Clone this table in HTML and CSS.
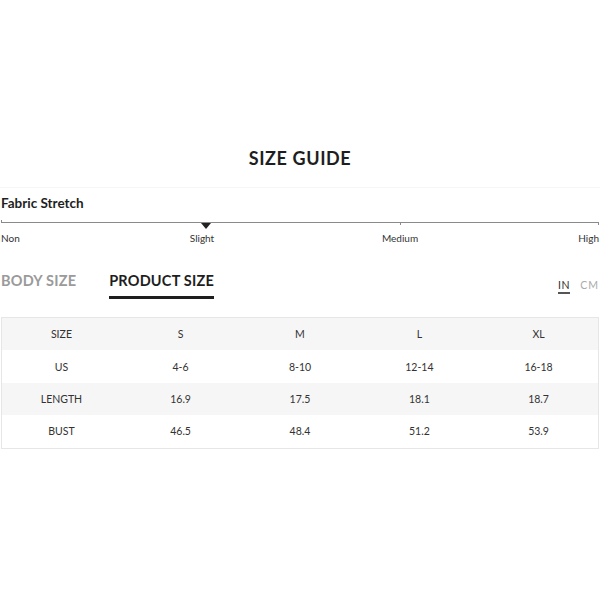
FILE: index.html
```html
<!DOCTYPE html>
<html>
<head>
<meta charset="utf-8">
<link rel="stylesheet" href="styles.css">
</head>
<body>
<div class="page">
  <h1 class="title">SIZE GUIDE</h1>
  <div class="stretch">
    <div class="stretch-title">Fabric Stretch</div>
    <div class="scale">
      <span class="tick tick-left"></span>
      <span class="tick tick-mid"></span>
      <span class="tick tick-right"></span>
      <span class="marker"></span>
    </div>
    <div class="labels">
      <span class="lab lab-non">Non</span>
      <span class="lab lab-slight">Slight</span>
      <span class="lab lab-medium">Medium</span>
      <span class="lab lab-high">High</span>
    </div>
  </div>
  <div class="tabs">
    <div class="tab-group">
      <span class="tab">BODY SIZE</span>
      <span class="tab active">PRODUCT SIZE</span>
    </div>
    <div class="units">
      <span class="unit active">IN</span>
      <span class="unit">CM</span>
    </div>
  </div>
  <table class="sizes">
    <tr class="shade"><td>SIZE</td><td>S</td><td>M</td><td>L</td><td>XL</td></tr>
    <tr><td>US</td><td>4-6</td><td>8-10</td><td>12-14</td><td>16-18</td></tr>
    <tr class="shade"><td>LENGTH</td><td>16.9</td><td>17.5</td><td>18.1</td><td>18.7</td></tr>
    <tr><td>BUST</td><td>46.5</td><td>48.4</td><td>51.2</td><td>53.9</td></tr>
  </table>
</div>
</body>
</html>
```
FILE: styles.css
```css
html, body {
  margin: 0;
  padding: 0;
  background: #fff;
}
.page {
  width: 600px;
  padding-top: 146px;
  font-family: Lato, "Liberation Sans", sans-serif;
  color: #222;
}
.title {
  margin: 0;
  text-align: center;
  font-size: 18px;
  font-weight: 700;
  letter-spacing: 0.6px;
  line-height: 24px;
  color: #1e1e1e;
  padding-bottom: 17px;
  border-bottom: 1px solid #f6f6f6;
}
.stretch {
  padding: 7px 0 0 1px;
}
.stretch-title {
  font-size: 13.5px;
  font-weight: 700;
  line-height: 16px;
  color: #1e1e1e;
}
.scale {
  position: relative;
  height: 1px;
  margin-top: 11px;
  margin-right: 1px;
  background: #8a8a8a;
}
.tick {
  position: absolute;
  width: 1px;
  height: 3px;
  background: #8a8a8a;
}
.tick-left { left: 0; top: -2px; }
.tick-mid { left: 399px; top: 0; }
.tick-right { right: 0; top: 0; }
.marker {
  position: absolute;
  left: 200px;
  top: 1px;
  width: 0;
  height: 0;
  border-left: 5px solid transparent;
  border-right: 5px solid transparent;
  border-top: 6px solid #222;
}
.labels {
  position: relative;
  height: 12px;
  margin-top: 9px;
  font-size: 10px;
  line-height: 12px;
  color: #333;
}
.lab {
  position: absolute;
  top: 0;
}
.lab-non { left: 0; }
.lab-slight { left: 201px; transform: translateX(-50%); }
.lab-medium { left: 399px; transform: translateX(-50%); }
.lab-high { right: 1px; }
.tabs {
  display: flex;
  justify-content: space-between;
  align-items: flex-start;
  margin-top: 28px;
  padding-left: 1px;
}
.tab-group {
  display: flex;
  gap: 33px;
}
.tab {
  font-size: 14.5px;
  font-weight: 700;
  line-height: 18px;
  color: #9a9a9a;
  padding-bottom: 6px;
  letter-spacing: 0.2px;
}
.tab.active {
  color: #1e1e1e;
  border-bottom: 3px solid #1e1e1e;
}
.units {
  display: flex;
  gap: 10px;
  padding-top: 7px;
  padding-right: 1px;
}
.unit {
  font-size: 10.5px;
  line-height: 12px;
  letter-spacing: 1px;
  color: #aaa;
}
.unit.active {
  color: #333;
  border-bottom: 2px solid #555;
  padding-bottom: 1px;
  letter-spacing: 0.6px;
}
.sizes {
  margin-top: 18px;
  margin-left: 1px;
  width: 598px;
  border-collapse: collapse;
  border: 1px solid #e6e6e6;
  table-layout: fixed;
  font-size: 10.5px;
  color: #333;
}
.sizes td {
  height: 32.4px;
  padding: 0;
  text-align: center;
}
.sizes tr.shade td {
  background: #f6f6f6;
}
```
